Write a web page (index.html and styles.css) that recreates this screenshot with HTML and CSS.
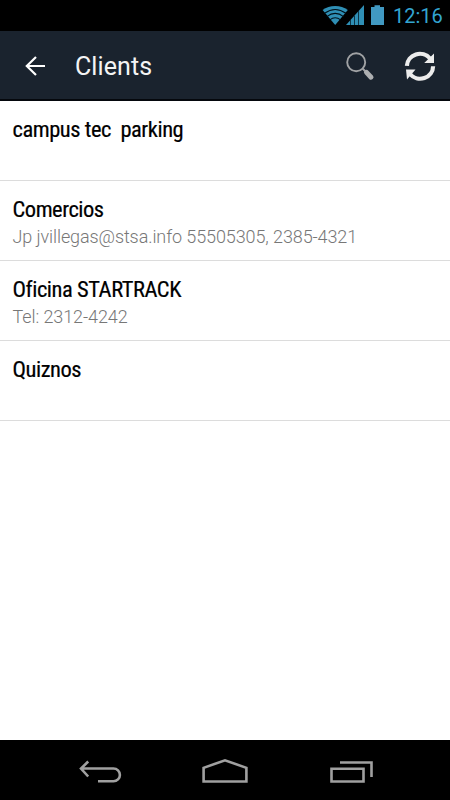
FILE: index.html
```html
<!DOCTYPE html>
<html lang="en">
<head>
<meta charset="utf-8">
<title>Clients</title>
<link rel="stylesheet" href="styles.css">
</head>
<body>
<div class="status">
  <svg class="signals" width="64" height="32" viewBox="322 0 64 32">
    <path d="M335.200 25L322.600 10Q328 5.900 335.200 5.900T347.800 10Z" fill="#2f8fb5"/>
    <g fill="none" stroke="#001018" stroke-width="1.100"><path d="M324.500 13.200Q335.200 5.800 345.900 13.200"/><path d="M326.800 16.600Q335.200 10.200 343.600 16.600"/><path d="M329.800 19.900Q335.200 15.600 340.600 19.900"/></g>
    <path d="M346 25L364 5V25Z" fill="#2f8fb5"/>
    <path d="M350.500 20V25M354.500 15.500V25M358.500 11V25" stroke="#0d3446" stroke-width="1"/>
    <path d="M371 7H374.500V5.200H380V7H384V25H371Z" fill="#4199c2"/>
  </svg>
  <span class="clock">12:16</span>
</div>
<header class="bar">
  <svg class="back" width="24" height="24" viewBox="23 54 24 24" fill="none" stroke="#fff" stroke-width="2.200"><path d="M45 66H27M36 57L26.800 66L36 75"/></svg>
  <h1 class="heading">Clients</h1>
  <svg class="search" width="32" height="32" viewBox="344 50 32 32"><circle cx="356.200" cy="62.300" r="9" fill="none" stroke="#a0a2a4" stroke-width="1.900"/><path d="M362.800 68.800L366 72" stroke="#a0a2a4" stroke-width="2"/><path d="M366.500 72.400L371 77.200" stroke="#adafb1" stroke-width="5" stroke-linecap="round"/></svg>
  <svg class="refresh" width="32" height="32" viewBox="404 50 32 32"><g fill="none" stroke="#ececec" stroke-width="4.200"><path d="M406.900 65.800A13 12.600 0 0 1 430 58.500"/><path d="M433.100 66.200A13 12.600 0 0 1 410 74"/></g><path d="M434 53.500V63H424.200ZM406 69.500H415.500L407 79.500Z" fill="#ececec"/></svg>
</header>
<main class="list">
  <section class="row"><h2 class="name">campus tec&nbsp; parking</h2></section>
  <section class="row"><h2 class="name">Comercios</h2><p class="detail">Jp jvillegas@stsa.info 55505305, 2385-4321</p></section>
  <section class="row"><h2 class="name">Oficina STARTRACK</h2><p class="detail">Tel: 2312-4242</p></section>
  <section class="row"><h2 class="name">Quiznos</h2></section>
</main>
<nav class="nav">
  <svg width="450" height="60" viewBox="0 740 450 60" fill="none" stroke="#a0a0a0" stroke-width="2.600">
    <path d="M81 768.500H113.500A6.200 6.200 0 0 1 113.500 781.300H98M88.200 761.500L81 768.500L88.200 776.500"/>
    <path d="M203.600 781.500V767.800L225 760.300L246.400 767.800V781.500Z"/>
    <path d="M331.500 768.800H363.500V781.500H331.500ZM340 762.500H371.500V777"/>
  </svg>
</nav>
</body>
</html>
```
FILE: styles.css
```css
* { box-sizing: border-box; }
body { margin: 0; width: 450px; height: 800px; display: flex; flex-direction: column; background: #fff; font-family: Roboto, sans-serif; overflow: hidden; }
svg { display: block; flex: none; }
h1, h2, p { margin: 0; }
.status { height: 31px; background: #000; display: flex; justify-content: flex-end; padding-right: 8px; }
.clock { width: 49px; margin-left: 7px; font-size: 20px; line-height: 32px; color: #33a5d1; white-space: nowrap; }
.bar { height: 70px; background: #1a232e; border-bottom: 2px solid #05080d; display: flex; align-items: center; padding: 1px 14px 0 23px; }
.heading { margin-left: 28px; padding-top: 3px; font-size: 25px; font-weight: 400; letter-spacing: 0.1px; line-height: 32px; color: #f4f4f4; flex: 1; }
.refresh { margin-left: 28px; }
.list { flex: 1; }
.row { height: 80px; padding: 14px 12px 0 12.5px; border-bottom: 1px solid #dcdcdc; }
.name { font-family: "Roboto Condensed", Roboto, sans-serif; font-stretch: 75%; font-size: 22.5px; font-weight: 400; letter-spacing: -0.46px; line-height: 28px; color: #000; -webkit-text-stroke: 0.2px #000; }
.detail { margin-top: 1px; font-size: 18px; font-weight: 300; letter-spacing: -0.1px; line-height: 25px; color: #777; white-space: nowrap; }
.nav { height: 60px; background: #000; }
```
